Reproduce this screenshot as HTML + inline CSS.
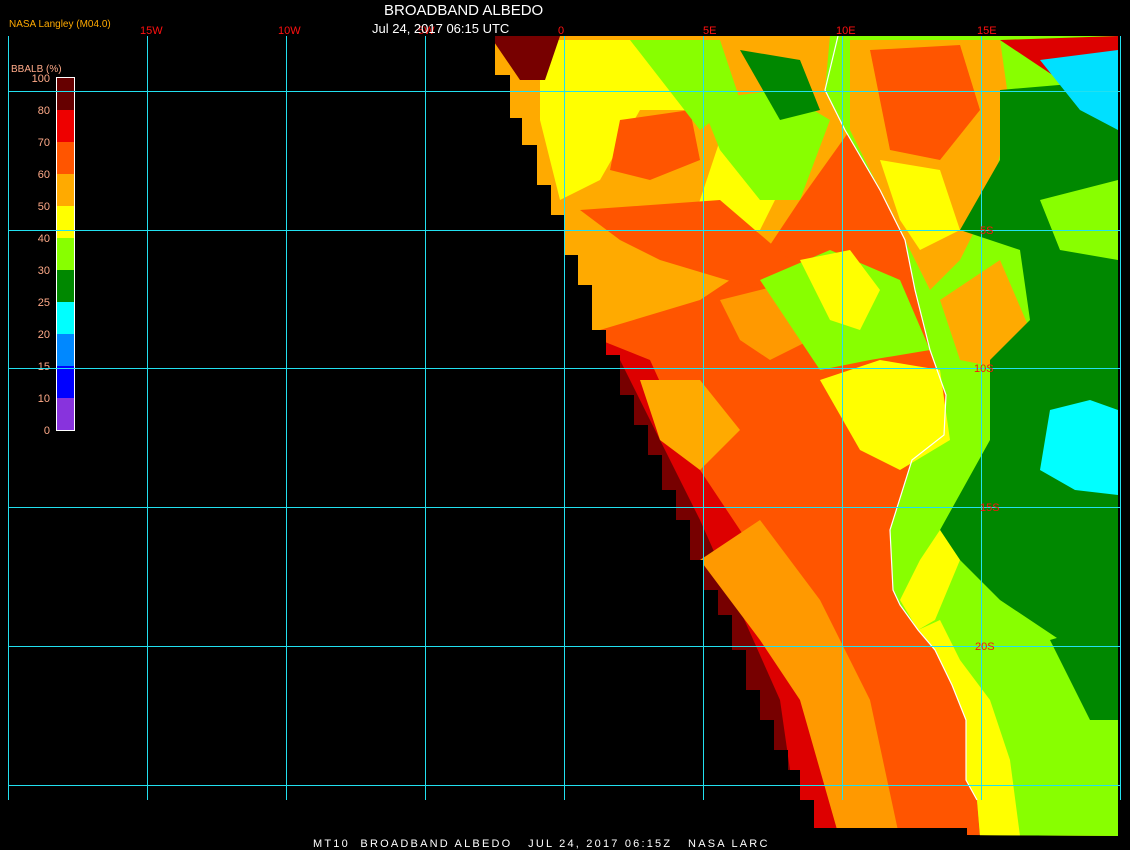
<!DOCTYPE html>
<html><head><meta charset="utf-8"><style>
html,body{margin:0;padding:0;background:#000;width:1130px;height:850px;overflow:hidden}
svg{display:block}
text{font-family:"Liberation Sans",sans-serif}
</style></head><body>
<svg width="1130" height="850" viewBox="0 0 1130 850">
<defs><clipPath id="d"><polygon points="495,36 495,75 510,75 510,118 522,118 522,145 537,145 537,185 551,185 551,215 565,215 565,255 578,255 578,285 592,285 592,330 606,330 606,355 620,355 620,395 634,395 634,425 648,425 648,455 662,455 662,490 676,490 676,520 690,520 690,560 704,560 704,590 718,590 718,615 732,615 732,650 746,650 746,690 760,690 760,720 774,720 774,750 788,750 788,770 800,770 800,800 814,800 814,828 967,828 967,835 1118,836 1118,36"/></clipPath></defs>
<g clip-path="url(#d)">
<rect x="480" y="30" width="650" height="820" fill="#ff5500"/>
<polygon points="600,340 650,360 700,470 760,560 800,640 840,760 860,840 780,840 480,300" fill="#dd0000"/>
<polygon points="600,360 620,360 700,520 780,700 800,840 760,840 600,400" fill="#770000"/>
<polygon points="700,560 760,520 820,600 870,700 900,840 840,840 800,700 760,640" fill="#ff9900"/>
<polygon points="640,380 700,380 740,430 700,470 660,440" fill="#ffaa00"/>
<polygon points="480,30 835,30 830,90 850,130 800,200 760,260 700,300 600,330 480,330" fill="#ffaa00"/>
<polygon points="540,40 720,40 700,110 640,110 600,180 560,200 540,120" fill="#ffff00"/>
<polygon points="620,120 690,110 700,160 650,180 610,170" fill="#ff5500"/>
<polygon points="720,140 800,150 760,230 720,250 680,260 700,200" fill="#ffff00"/>
<polygon points="630,40 720,40 740,100 700,130" fill="#88ff00"/>
<polygon points="700,100 780,90 830,120 800,200 760,200 720,150" fill="#88ff00"/>
<polygon points="740,50 800,60 820,110 780,120" fill="#008800"/>
<polygon points="490,36 560,36 545,80 520,80" fill="#770000"/>
<polygon points="580,210 720,200 790,260 760,290 660,260 620,240" fill="#ff5500"/>
<polygon points="720,300 800,280 850,300 830,330 770,360 740,340" fill="#ff9900"/>
<polygon points="830,36 1118,36 1118,836 980,836 977,800 966,780 966,720 952,685 935,650 918,630 900,605 893,590 890,530 912,460 944,435 946,395 930,350 915,290 905,240 880,190 845,130 825,90" fill="#88ff00"/>
<polygon points="850,40 1000,40 1010,110 990,200 960,260 930,290 905,240 880,190 850,130" fill="#ffaa00"/>
<polygon points="870,50 960,45 980,110 940,160 890,150" fill="#ff5500"/>
<polygon points="880,160 940,170 960,230 920,250 900,220" fill="#ffff00"/>
<polygon points="1000,40 1118,36 1118,70 1060,80" fill="#dd0000"/>
<polygon points="760,280 830,250 900,280 930,350 870,360 820,370" fill="#88ff00"/>
<polygon points="800,260 850,250 880,290 860,330 830,320" fill="#ffff00"/>
<polygon points="820,380 880,360 940,370 950,440 900,470 860,450" fill="#ffff00"/>
<polygon points="940,300 1000,260 1030,330 1010,370 960,360" fill="#ffaa00"/>
<polygon points="1000,90 1118,80 1118,660 1060,640 1000,600 960,560 940,530 990,440 990,360 1030,320 1020,250 960,230 1000,160" fill="#008800"/>
<polygon points="1040,200 1118,180 1118,260 1060,250" fill="#88ff00"/>
<polygon points="1050,640 1118,620 1118,720 1090,720" fill="#008800"/>
<polygon points="1040,60 1118,50 1118,130 1080,110" fill="#00e0ff"/>
<polygon points="1050,410 1090,400 1118,410 1118,495 1075,490 1040,470" fill="#00ffff"/>
<polygon points="960,600 1000,610 1000,640 975,650" fill="#88ff00"/>
<polygon points="918,630 935,650 952,685 966,720 966,780 977,800 980,836 1020,836 1010,760 990,700 960,660 940,620" fill="#ffff00"/>
<polygon points="900,600 920,560 940,530 960,560 935,620 918,630" fill="#ffff00"/>
<polyline points="838,36 825,90 845,130 880,190 905,240 915,290 930,350 946,395 944,435 912,460 890,530 893,590 900,605 918,630 935,650 952,685 966,720 966,780 977,800" fill="none" stroke="#fff" stroke-width="1.2"/>
</g>
<g stroke="#22e0f0" stroke-width="1" fill="none">
<line x1="8.5" y1="36" x2="8.5" y2="800"/><line x1="147.5" y1="36" x2="147.5" y2="800"/><line x1="286.5" y1="36" x2="286.5" y2="800"/><line x1="425.5" y1="36" x2="425.5" y2="800"/><line x1="564.5" y1="36" x2="564.5" y2="800"/><line x1="703.5" y1="36" x2="703.5" y2="800"/><line x1="842.5" y1="36" x2="842.5" y2="800"/><line x1="981.5" y1="36" x2="981.5" y2="800"/><line x1="1120.5" y1="36" x2="1120.5" y2="800"/>
<line x1="8" y1="91.5" x2="1120" y2="91.5"/><line x1="8" y1="230.5" x2="1120" y2="230.5"/><line x1="8" y1="368.5" x2="1120" y2="368.5"/><line x1="8" y1="507.5" x2="1120" y2="507.5"/><line x1="8" y1="646.5" x2="1120" y2="646.5"/><line x1="8" y1="785.5" x2="1120" y2="785.5"/>
</g>
<g fill="#ff1010" font-size="11">
<text x="140" y="34">15W</text><text x="278" y="34">10W</text><text x="418" y="34">5W</text><text x="558" y="34">0</text><text x="703" y="34">5E</text><text x="836" y="34">10E</text><text x="977" y="34">15E</text>
<text x="980" y="234">5S</text><text x="974" y="372">10S</text><text x="980" y="511">15S</text><text x="975" y="650">20S</text>
</g>
<text x="384" y="15" fill="#fff" font-size="15">BROADBAND ALBEDO</text>
<text x="372" y="33" fill="#fff" font-size="13">Jul 24, 2017 06:15 UTC</text>
<text x="9" y="27" fill="#ffaa00" font-size="10">NASA Langley (M04.0)</text>
<text x="11" y="72" fill="#ffaa88" font-size="10">BBALB (%)</text>
<g fill="#ffaa88" font-size="11" text-anchor="end">
<text x="50" y="82">100</text><text x="50" y="114">80</text><text x="50" y="146">70</text><text x="50" y="178">60</text><text x="50" y="210">50</text><text x="50" y="242">40</text><text x="50" y="274">30</text><text x="50" y="306">25</text><text x="50" y="338">20</text><text x="50" y="370">15</text><text x="50" y="402">10</text><text x="50" y="434">0</text>
</g>
<rect x="56" y="77" width="19" height="33" fill="#660000"/>
<rect x="56" y="110" width="19" height="32" fill="#ee0000"/>
<rect x="56" y="142" width="19" height="32" fill="#ff5500"/>
<rect x="56" y="174" width="19" height="32" fill="#ffaa00"/>
<rect x="56" y="206" width="19" height="32" fill="#ffff00"/>
<rect x="56" y="238" width="19" height="32" fill="#88ff00"/>
<rect x="56" y="270" width="19" height="32" fill="#008800"/>
<rect x="56" y="302" width="19" height="32" fill="#00ffff"/>
<rect x="56" y="334" width="19" height="32" fill="#0088ff"/>
<rect x="56" y="366" width="19" height="32" fill="#0000ff"/>
<rect x="56" y="398" width="19" height="32" fill="#8833dd"/>
<rect x="56.5" y="77.5" width="18" height="353" fill="none" stroke="#fff" stroke-width="1"/>
<g stroke="#22e0f0"><line x1="8" y1="91.5" x2="120" y2="91.5"/><line x1="8" y1="230.5" x2="120" y2="230.5"/><line x1="8" y1="368.5" x2="120" y2="368.5"/></g>
<text x="313" y="847" fill="#fff" font-size="11" font-family="Liberation Mono,monospace" letter-spacing="2.2" xml:space="preserve">MT10  BROADBAND ALBEDO   JUL 24, 2017 06:15Z   NASA LARC</text>
</svg>
</body></html>
